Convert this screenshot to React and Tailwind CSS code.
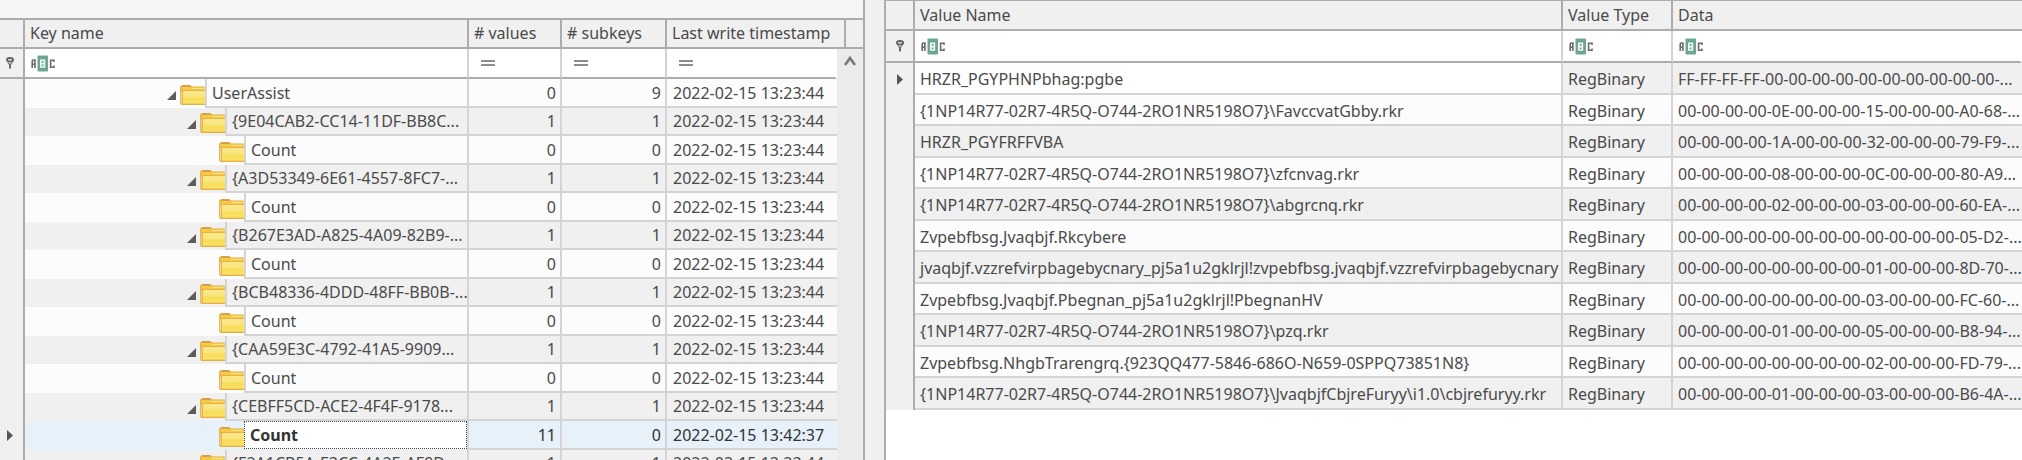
const keyRows = [
  { name: "UserAssist", level: 0, values: 0, subkeys: 9, time: "2022-02-15 13:23:44" },
  { name: "{9E04CAB2-CC14-11DF-BB8C...", level: 1, values: 1, subkeys: 1, time: "2022-02-15 13:23:44" },
  { name: "Count", level: 2, values: 0, subkeys: 0, time: "2022-02-15 13:23:44" },
  { name: "{A3D53349-6E61-4557-8FC7-...", level: 1, values: 1, subkeys: 1, time: "2022-02-15 13:23:44" },
  { name: "Count", level: 2, values: 0, subkeys: 0, time: "2022-02-15 13:23:44" },
  { name: "{B267E3AD-A825-4A09-82B9-...", level: 1, values: 1, subkeys: 1, time: "2022-02-15 13:23:44" },
  { name: "Count", level: 2, values: 0, subkeys: 0, time: "2022-02-15 13:23:44" },
  { name: "{BCB48336-4DDD-48FF-BB0B-...", level: 1, values: 1, subkeys: 1, time: "2022-02-15 13:23:44" },
  { name: "Count", level: 2, values: 0, subkeys: 0, time: "2022-02-15 13:23:44" },
  { name: "{CAA59E3C-4792-41A5-9909...", level: 1, values: 1, subkeys: 1, time: "2022-02-15 13:23:44" },
  { name: "Count", level: 2, values: 0, subkeys: 0, time: "2022-02-15 13:23:44" },
  { name: "{CEBFF5CD-ACE2-4F4F-9178...", level: 1, values: 1, subkeys: 1, time: "2022-02-15 13:23:44" },
  { name: "Count", level: 2, values: 11, subkeys: 0, time: "2022-02-15 13:42:37", selected: true },
  { name: "{F2A1CB5A-E3CC-4A2E-AF9D...", level: 1, values: 1, subkeys: 1, time: "2022-02-15 13:23:44" },
];

const valueRows = [
  ["HRZR_PGYPHNPbhag:pgbe", "FF-FF-FF-FF-00-00-00-00-00-00-00-00-00-00-..."],
  ["{1NP14R77-02R7-4R5Q-O744-2RO1NR5198O7}\\FavccvatGbby.rkr", "00-00-00-00-0E-00-00-00-15-00-00-00-A0-68-..."],
  ["HRZR_PGYFRFFVBA", "00-00-00-00-1A-00-00-00-32-00-00-00-79-F9-..."],
  ["{1NP14R77-02R7-4R5Q-O744-2RO1NR5198O7}\\zfcnvag.rkr", "00-00-00-00-08-00-00-00-0C-00-00-00-80-A9..."],
  ["{1NP14R77-02R7-4R5Q-O744-2RO1NR5198O7}\\abgrcnq.rkr", "00-00-00-00-02-00-00-00-03-00-00-00-60-EA-..."],
  ["Zvpebfbsg.Jvaqbjf.Rkcybere", "00-00-00-00-00-00-00-00-00-00-00-00-05-D2-..."],
  ["jvaqbjf.vzzrefvirpbagebycnary_pj5a1u2gklrjl!zvpebfbsg.jvaqbjf.vzzrefvirpbagebycnary", "00-00-00-00-00-00-00-00-01-00-00-00-8D-70-..."],
  ["Zvpebfbsg.Jvaqbjf.Pbegnan_pj5a1u2gklrjl!PbegnanHV", "00-00-00-00-00-00-00-00-03-00-00-00-FC-60-..."],
  ["{1NP14R77-02R7-4R5Q-O744-2RO1NR5198O7}\\pzq.rkr", "00-00-00-00-01-00-00-00-05-00-00-00-B8-94-..."],
  ["Zvpebfbsg.NhgbTrarengrq.{923QQ477-5846-686O-N659-0SPPQ73851N8}", "00-00-00-00-00-00-00-00-02-00-00-00-FD-79-..."],
  ["{1NP14R77-02R7-4R5Q-O744-2RO1NR5198O7}\\JvaqbjfCbjreFuryy\\i1.0\\cbjrefuryy.rkr", "00-00-00-00-01-00-00-00-03-00-00-00-B6-4A-..."],
];

const indents = ["pl-[142px]", "pl-[162px]", "pl-[194px]"];

function PinIcon() {
  return (
    <svg viewBox="0 0 8 12" className="mx-auto block h-3 w-2" aria-hidden="true">
      <ellipse cx="4" cy="2.8" rx="3.2" ry="1.9" fill="#c8c8c8" stroke="#5c5c5c" strokeWidth="1.6" />
      <path d="M0.6 4 L4 7 L7.4 4 L5.2 7.4 H4.9 V11.4 H3.1 V7.4 H2.8 Z" fill="#5c5c5c" />
    </svg>
  );
}

function TextFilterIcon() {
  return (
    <svg viewBox="0 0 24 17" className="block h-[17px] w-6 shrink-0" aria-hidden="true">
      <path d="M1.2 13 V6.2 Q1.2 5 2.4 5 H3.9 V13 M1.2 9.2 H3.9" fill="none" stroke="#6a6a6a" strokeWidth="1.6" />
      <rect x="6.5" y="0.5" width="10.5" height="16" rx="0.8" fill="#6fa693" />
      <path d="M9.8 5.2 H13.4 V12 H9.8 Z M9.8 8.6 H13.4" fill="none" stroke="#f1f8f5" strokeWidth="1.6" />
      <path d="M23 6.9 V5.2 H19.6 V12.3 H23 V10.6" fill="none" stroke="#6a6a6a" strokeWidth="1.6" />
    </svg>
  );
}

function EqualsIcon() {
  return (
    <svg viewBox="0 0 14 6" className="block h-1.5 w-3.5 shrink-0" aria-hidden="true">
      <path d="M0 1 H14 M0 5 H14" stroke="#8c8c8c" strokeWidth="2" />
    </svg>
  );
}

function RowArrow() {
  return (
    <svg viewBox="0 0 6 11" className="mx-auto block h-[11px] w-1.5" aria-hidden="true">
      <path d="M0 0 L6 5.5 L0 11 Z" fill="#555" />
    </svg>
  );
}

function ExpandArrow() {
  return (
    <svg viewBox="0 0 9 9" className="block h-[9px] w-[9px]" aria-hidden="true">
      <path d="M9 0 V9 H0 Z" fill="#5c5c5c" />
    </svg>
  );
}

function FolderIcon() {
  return (
    <svg viewBox="0 0 25 20" className="block h-5 w-[25px] shrink-0" aria-hidden="true">
      <defs>
        <linearGradient id="folder" x1="0" y1="0" x2="0" y2="1">
          <stop offset="0" stopColor="#fbe98f" />
          <stop offset="0.5" stopColor="#f9e47c" />
          <stop offset="0.55" stopColor="#f7dd56" />
          <stop offset="1" stopColor="#f9e468" />
        </linearGradient>
      </defs>
      <path d="M0.8 19.3 V1.8 L2 0.8 H10.5 L11.5 2 H24 V6 H0.8 Z" fill="#f5cb45" stroke="#e3a93a" strokeWidth="1.2" />
      <path d="M2.5 1 H10" stroke="#c58d50" strokeWidth="1.2" />
      <path d="M12 3.4 H24" stroke="#fbe27a" strokeWidth="1.4" />
      <path d="M4 5.4 H25 V19 H2.4 V7 Z" fill="url(#folder)" />
      <path d="M2.4 19 V6.8 L4 5.4 H25" fill="none" stroke="#e6b03f" strokeWidth="1" />
      <path d="M1 19.3 H25" stroke="#e4ab3c" strokeWidth="1.3" />
    </svg>
  );
}

function FilterCell({ label, icon, pad = "pl-1.5", edge = "border-r-[#d4d4d4]" }) {
  return (
    <td className={`border-r-2 border-b-2 border-b-[#adadad] bg-white p-0 ${edge}`}>
      <label className={`flex items-center gap-2 ${pad}`}>
        {icon}
        <input type="text" aria-label={`Filter ${label}`} className="h-6 w-full min-w-0 bg-transparent outline-none" />
      </label>
    </td>
  );
}

const head = "border-r-2 border-b-2 border-[#adadad] bg-[#f0f0f0] p-0 pl-[5px] text-left font-normal whitespace-nowrap";
const gutter = "border-r-2 border-[#adadad] bg-[#f0f0f0] p-0";

function KeyTree() {
  return (
    <section aria-label="Registry keys" className="w-[865px] shrink-0 overflow-hidden border-r-2 border-[#adadad] bg-[#f6f6f6] pt-[18px]">
      <table className="w-full table-fixed border-separate border-spacing-0 border-t-2 border-[#adadad]">
        <colgroup>
          <col className="w-[25px]" />
          <col />
          <col className="w-[93px]" />
          <col className="w-[105px]" />
          <col className="w-[170px]" />
          <col className="w-[9px]" />
          <col className="w-[17px]" />
        </colgroup>
        <thead>
          <tr className="h-[29px]">
            <th className={head} aria-label="Row state" />
            <th className={`${head} pb-0.5`}>Key name</th>
            <th className={`${head} pb-0.5`}># values</th>
            <th className={`${head} pb-0.5`}># subkeys</th>
            <th className={`${head} pb-0.5`} colSpan={2}>Last write timestamp</th>
            <th className="border-b-2 border-[#adadad] bg-[#f0f0f0] p-0" aria-label="Scroll" />
          </tr>
        </thead>
        <tbody>
          <tr className="h-[30px]">
            <td className={`${gutter} border-b-2 pr-1`}><PinIcon /></td>
            <FilterCell label="key name" icon={<TextFilterIcon />} />
            <FilterCell label="values" icon={<EqualsIcon />} pad="pl-3" />
            <FilterCell label="subkeys" icon={<EqualsIcon />} pad="pl-3" />
            <FilterCell label="timestamp" icon={<EqualsIcon />} pad="pl-3" edge="border-r-[#ffffff]" />
            <td colSpan={2} rowSpan={keyRows.length + 1} className="bg-[#ebebeb] p-0 align-top">
              <button type="button" aria-label="Scroll up" className="flex h-6 w-full items-center justify-center">
                <svg viewBox="0 0 12 10" className="h-2.5 w-3" aria-hidden="true">
                  <path d="M1 9 L6 2 L11 9" fill="none" stroke="#777" strokeWidth="2.6" />
                </svg>
              </button>
            </td>
          </tr>
          {keyRows.map((row, i) => {
            const bg = row.selected ? "bg-[#e6f1fa] text-[#333]" : row.level === 1 ? "bg-[#f0f0f0]" : "bg-[#fcfcfc]";
            const cell = `border-r-2 border-b-2 border-[#d4d4d4] p-0 ${bg}`;
            return (
              <tr key={i} className={i % 2 ? "h-[28px]" : "h-[29px]"}>
                <td className={`${gutter} pr-1`}>{row.selected && <RowArrow />}</td>
                <td className={`h-[inherit] border-r-2 border-[#d4d4d4] p-0 ${bg}`}>
                  <div className={`flex h-full items-stretch ${indents[row.level]}`}>
                    {row.level < 2 && (
                      <button type="button" aria-label={`Collapse ${row.name}`} className="flex w-[13px] shrink-0 items-center pt-1">
                        <ExpandArrow />
                      </button>
                    )}
                    <span className="flex shrink-0 items-center pt-0.5"><FolderIcon /></span>
                    {row.selected ? (
                      <span className="mb-px flex min-w-0 flex-1 items-center border border-dotted border-[#444] bg-white pl-[5px] font-bold">
                        {row.name}
                      </span>
                    ) : (
                      <span className="flex min-w-0 flex-1 items-center overflow-hidden border-b-2 border-l-2 border-[#d4d4d4] pl-[5px] whitespace-nowrap">
                        {row.name}
                      </span>
                    )}
                  </div>
                </td>
                <td className={`${cell} pr-1 text-right`}>{row.values}</td>
                <td className={`${cell} pr-1 text-right`}>{row.subkeys}</td>
                <td className={`border-b-2 border-[#d4d4d4] p-0 pl-1.5 whitespace-nowrap ${bg}`}>{row.time}</td>
              </tr>
            );
          })}
        </tbody>
      </table>
    </section>
  );
}

function ValueGrid() {
  return (
    <section aria-label="Registry values" className="min-w-0 flex-1 overflow-hidden border-l-2 border-[#adadad] bg-white">
      <table className="w-full table-fixed border-separate border-spacing-0 border-t border-[#adadad]">
        <colgroup>
          <col className="w-[29px]" />
          <col className="w-[648px]" />
          <col className="w-[110px]" />
          <col />
        </colgroup>
        <thead>
          <tr className="h-[30px]">
            <th className={head} aria-label="Row state" />
            <th className={head}>Value Name</th>
            <th className={head}>Value Type</th>
            <th className="border-b-2 border-[#adadad] bg-[#f0f0f0] p-0 pl-[5px] text-left font-normal">Data</th>
          </tr>
        </thead>
        <tbody>
          <tr className="h-8">
            <td className={`${gutter} border-b-2`}><PinIcon /></td>
            <FilterCell label="value name" icon={<TextFilterIcon />} />
            <FilterCell label="value type" icon={<TextFilterIcon />} />
            <FilterCell label="data" icon={<TextFilterIcon />} edge="border-r-[#ffffff]" />
          </tr>
          {valueRows.map(([name, data], i) => {
            const stripe = i % 2 ? "bg-[#fcfcfc]" : "bg-[#f0f0f0]";
            const cell = "border-b-2 border-[#d4d4d4] p-0 pt-0.5 pl-[5px] whitespace-nowrap overflow-hidden";
            return (
              <tr key={name} className={i % 2 ? "h-[31px]" : "h-8"}>
                <td className={gutter}>{i === 0 && <RowArrow />}</td>
                <td className={`${cell} border-r-2 ${i === 0 ? "bg-white" : stripe}`}>{name}</td>
                <td className={`${cell} border-r-2 ${stripe}`}>RegBinary</td>
                <td className={`${cell} ${stripe}`}>{data}</td>
              </tr>
            );
          })}
        </tbody>
      </table>
    </section>
  );
}

export default function App() {
  return (
    <main className="flex h-screen overflow-hidden bg-[#f0f0f0] font-['Noto_Sans',sans-serif] text-base leading-5 text-[#4a4a4a]">
      <KeyTree />
      <div role="separator" aria-orientation="vertical" className="w-[19px] shrink-0" />
      <ValueGrid />
    </main>
  );
}
